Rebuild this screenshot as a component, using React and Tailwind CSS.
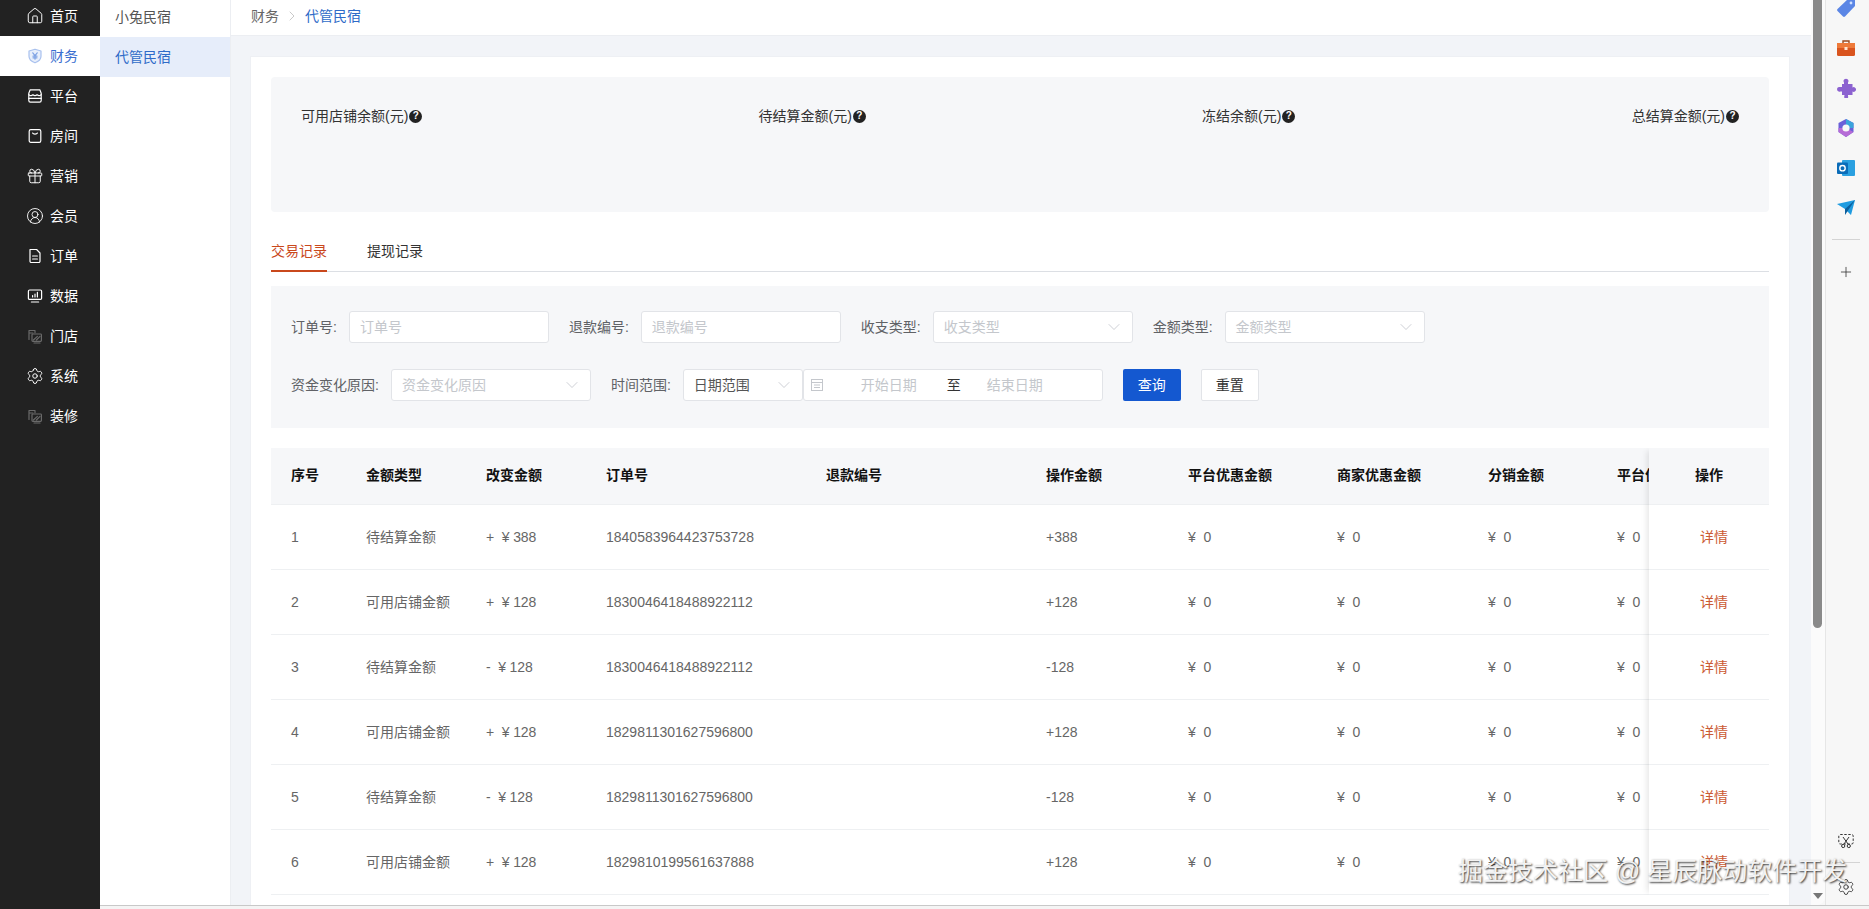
import { ChevronDown, ChevronRight, House, Gift, CircleUserRound, Plus, Settings } from 'lucide-react';

const sans = "font-['Liberation_Sans','Noto_Sans_CJK_SC',sans-serif]";

const rowGrid = 'grid grid-cols-[75px_120px_120px_220px_220px_142px_149px_151px_129px_200px]';

const records = [
  { no: 1, type: '待结算金额', change: '+  ¥ 388', order: '1840583964423753728', amount: '+388' },
  { no: 2, type: '可用店铺金额', change: '+  ¥ 128', order: '1830046418488922112', amount: '+128' },
  { no: 3, type: '待结算金额', change: '-  ¥ 128', order: '1830046418488922112', amount: '-128' },
  { no: 4, type: '可用店铺金额', change: '+  ¥ 128', order: '1829811301627596800', amount: '+128' },
  { no: 5, type: '待结算金额', change: '-  ¥ 128', order: '1829811301627596800', amount: '-128' },
  { no: 6, type: '可用店铺金额', change: '+  ¥ 128', order: '1829810199561637888', amount: '+128' },
];

const Svg = ({ children, className = 'w-4 h-4' }) => (
  <svg viewBox="0 0 16 16" fill="none" stroke="currentColor" strokeWidth="1.2" strokeLinecap="round" strokeLinejoin="round" className={className}>
    {children}
  </svg>
);

const ShieldIcon = () => (
  <Svg>
    <path d="M8 1.2 14 3v5.2c0 3.2-2.8 5.4-6 6.6-3.2-1.2-6-3.4-6-6.6V3z" stroke="#a9c1ee" fill="#e8effb" />
    <path d="M5.8 4.8 8 7.6l2.2-2.8M8 7.6v3.6M6 8.2h4M6 9.8h4" stroke="#7fa3e4" />
  </Svg>
);
const StoreIcon = () => (
  <Svg>
    <path d="M3.2 1.8h9.6l1.4 3.4v7.4a1.6 1.6 0 0 1-1.6 1.6H3.4a1.6 1.6 0 0 1-1.6-1.6V5.2z" />
    <path d="M1.8 6.6c1.4 1.4 2.8 1.4 4.1.2 1.4 1.2 2.8 1.2 4.2 0 1.3 1.2 2.7 1.2 4.1-.2" />
    <path d="M1.8 10.4h12.4" />
  </Svg>
);
const BagIcon = () => (
  <Svg>
    <rect x="2.2" y="1.6" width="11.6" height="12.8" rx="1.6" />
    <path d="M5.6 5c.6 1.4 4.2 1.4 4.8 0" />
  </Svg>
);
const FileIcon = () => (
  <Svg>
    <path d="M3 1.5h6.6L13 5v8.2a1.3 1.3 0 0 1-1.3 1.3H4.3A1.3 1.3 0 0 1 3 13.2z" />
    <path d="M5.6 8h4.8M5.6 11h4.8" />
  </Svg>
);
const MonitorIcon = () => (
  <Svg>
    <rect x="1.4" y="2" width="13.2" height="9.4" rx="1.2" />
    <path d="M4.4 14h7.2M5.6 9V7.6M8 9V6M10.4 9V4.4" />
  </Svg>
);
const BrokenImageIcon = () => (
  <Svg>
    <g stroke="#6a6a6a">
      <path d="M2 11.5V2.5h6v2.2M2 5h4" />
      <rect x="5" y="6" width="9.4" height="7.4" rx="0.8" />
      <path d="m6.4 12 4-3.6M9.4 12l3.6-3.6M7 15h6" />
    </g>
  </Svg>
);

const lucideClass = 'w-[18px] h-[18px] -mx-px';

const menu = [
  { label: '首页', icon: <House className={lucideClass} strokeWidth={1.3} /> },
  { label: '财务', icon: <ShieldIcon />, active: true },
  { label: '平台', icon: <StoreIcon /> },
  { label: '房间', icon: <BagIcon /> },
  { label: '营销', icon: <Gift className={lucideClass} strokeWidth={1.3} /> },
  { label: '会员', icon: <CircleUserRound className={lucideClass} strokeWidth={1.2} /> },
  { label: '订单', icon: <FileIcon /> },
  { label: '数据', icon: <MonitorIcon /> },
  { label: '门店', icon: <BrokenImageIcon /> },
  { label: '系统', icon: <Settings className={lucideClass} strokeWidth={1.3} /> },
  { label: '装修', icon: <BrokenImageIcon /> },
];

const HelpDot = () => (
  <span className="flex items-center justify-center w-[13px] h-[13px] rounded-full bg-[#222] text-white text-[10px] font-bold leading-none">?</span>
);

const SelectArrow = () => <ChevronDown className="w-5 h-5 -mr-[2px] text-[#c4c7cc]" strokeWidth={1} />;

const Field = ({ label, placeholder, select }) => (
  <div className="flex items-center gap-3">
    <span className="text-[#606266]">{label}:</span>
    <div className="w-[200px] h-8 flex items-center justify-between px-[10px] bg-white border border-[#e2e4e8] rounded-[3px] text-[#c4c7cc]">
      <span>{placeholder}</span>
      {select && <SelectArrow />}
    </div>
  </div>
);

function RecordTable() {
  return (
    <div className="mt-5 flex overflow-hidden text-[#666]">
      <div className="w-[1378px] overflow-hidden">
        <div className={`${rowGrid} w-[1526px] h-[57px] items-center pb-[2px] bg-[#f6f7f9] border-b border-[#eef0f2] font-bold text-[#111]`}>
          <div className="pl-5">序号</div>
          <div className="pl-5">金额类型</div>
          <div className="pl-5">改变金额</div>
          <div className="pl-5">订单号</div>
          <div className="pl-5">退款编号</div>
          <div className="pl-5">操作金额</div>
          <div className="pl-5">平台优惠金额</div>
          <div className="pl-5">商家优惠金额</div>
          <div className="pl-5">分销金额</div>
          <div className="pl-5 whitespace-nowrap">平台优惠分摊</div>
        </div>
        {records.map((r) => (
          <div key={r.no} className={`${rowGrid} w-[1526px] h-[65px] items-center border-b border-[#eef0f2]`}>
            <div className="pl-5">{r.no}</div>
            <div className="pl-5">{r.type}</div>
            <div className="pl-5 whitespace-pre tracking-[-0.1px]">{r.change}</div>
            <div className="pl-5">{r.order}</div>
            <div className="pl-5" />
            <div className="pl-5">{r.amount}</div>
            <div className="pl-5 whitespace-pre">¥  0</div>
            <div className="pl-5 whitespace-pre">¥  0</div>
            <div className="pl-5 whitespace-pre">¥  0</div>
            <div className="pl-5 whitespace-pre">¥  0</div>
          </div>
        ))}
      </div>
      <div className="w-[120px] shrink-0 relative shadow-[-5px_0_6px_-3px_rgba(0,0,0,0.1)]">
        <div className="h-[57px] flex items-center pb-[2px] pl-[46px] bg-[#f6f7f9] border-b border-[#eef0f2] font-bold text-[#111]">操作</div>
        {records.map((r) => (
          <div key={r.no} className="h-[65px] flex items-center pl-[51px] border-b border-[#eef0f2] text-[#cb5a33]">详情</div>
        ))}
      </div>
    </div>
  );
}

function SidePanel() {
  return (
    <div className="w-[44px] h-full flex flex-col items-center pr-[3px] bg-[#f7f7f7] border-l border-[#e6e6e6] relative">
      <div className="flex flex-col items-center gap-[20px] -mt-[2px]">
        {/* tag */}
        <svg viewBox="0 0 20 20" className="w-5 h-5">
          <path d="M12 1h6a1 1 0 0 1 1 1v6L9 18.5a1.5 1.5 0 0 1-2 0L1.5 13a1.5 1.5 0 0 1 0-2z" fill="#5b86e5" />
          <circle cx="15" cy="5" r="1.4" fill="#cfe0ff" />
        </svg>
        {/* briefcase */}
        <svg viewBox="0 0 20 20" className="w-5 h-5">
          <path d="M7 5V3h6v2" stroke="#9a4a20" strokeWidth="1.4" fill="none" />
          <rect x="1" y="5" width="18" height="13" rx="1.5" fill="#d9541e" />
          <rect x="1" y="5" width="18" height="5" fill="#ee7a3a" />
          <rect x="8.5" y="9" width="3" height="3" fill="#ffe3cf" />
        </svg>
        {/* puzzle */}
        <svg viewBox="0 0 20 20" className="w-5 h-5">
          <path d="M8 4.5a2.4 2.4 0 1 1 4 0V6h4.5v3.4a2.4 2.4 0 1 1 0 4.2V17H12v1a2 2 0 1 1-3.6 0v-1H6v-3.5H4.4a2.4 2.4 0 1 1 0-4.4H6V6h2z" fill="#8c62d0" />
        </svg>
        {/* ring logo */}
        <svg viewBox="0 0 20 20" className="w-5 h-5">
          <path d="M10 1 17.5 5 17.5 14 10 19 2.5 14 2.5 5z" fill="#6a5fd8" />
          <path d="M10 1 17.5 5 17.5 10 10 10z" fill="#3ba4dc" />
          <path d="M2.5 10 10 10 17.5 14 10 19 2.5 14z" fill="#b66bd6" />
          <circle cx="10" cy="10" r="3.6" fill="#f7f7f7" />
        </svg>
        {/* mail */}
        <svg viewBox="0 0 20 20" className="w-5 h-5">
          <rect x="6" y="2" width="13" height="16" rx="1" fill="#2aa0e0" />
          <rect x="1" y="4.5" width="11" height="11.5" rx="1" fill="#0a6cb8" />
          <circle cx="6.5" cy="10.2" r="2.7" fill="none" stroke="#fff" strokeWidth="1.4" />
        </svg>
        {/* plane */}
        <svg viewBox="0 0 20 20" className="w-5 h-5">
          <path d="M1 6 19 2 15 17 9 11z" fill="#1e9be0" />
          <path d="M9 11 19 2 11 14 9 17z" fill="#0b5f9e" />
        </svg>
      </div>
      <div className="w-7 h-px bg-[#d4d4d4] mt-[21px]" />
      <Plus className="w-4 h-4 mt-[24px] text-[#333]" strokeWidth={1.2} />
      <div className="mt-auto flex flex-col items-center pb-[9px]">
        <svg viewBox="0 0 16 16" fill="none" stroke="#333" strokeWidth="1" className="w-4 h-4">
          <rect x="0.8" y="1.5" width="14.4" height="9.5" rx="1.5" strokeDasharray="2.4 1.6" />
          <path d="m5 4 5 7M11 4l-5 7" />
          <circle cx="5.2" cy="13" r="1.6" />
          <circle cx="10.8" cy="13" r="1.6" />
        </svg>
        <div className="w-7 h-px bg-[#d4d4d4] mt-[13px]" />
        <Settings className="w-[18px] h-[18px] mt-[15px] text-[#333]" strokeWidth={1.2} />
      </div>
    </div>
  );
}

export default function App() {
  return (
    <div className={`${sans} relative w-full h-[909px] overflow-hidden flex bg-[#f7f7f7] text-sm`}>
      {/* main menu */}
      <aside className="w-[100px] shrink-0 bg-[#222] text-white overflow-hidden">
        <div className="-mt-1">
          {menu.map((m) => (
            <div key={m.label} className={`h-10 flex items-center pl-[27px] gap-[7px] ${m.active ? 'bg-white text-[#3a6fd0]' : ''}`}>
              {m.icon}
              <span>{m.label}</span>
            </div>
          ))}
        </div>
      </aside>

      <div className="flex-1 min-w-0 flex flex-col">
        <div className="flex-1 min-h-0 flex">
          <div className="flex-1 min-w-0 flex overflow-hidden rounded-br-lg">
            {/* sub menu */}
            <aside className="w-[131px] shrink-0 bg-white border-r border-[#eceef2]">
              <div className="-mt-[3px] h-10 flex items-center pl-[15px] text-[#555]">小兔民宿</div>
              <div className="h-10 flex items-center pl-[15px] bg-[#e6edfa] text-[#2f6bc8]">代管民宿</div>
            </aside>

            {/* page */}
            <main className="flex-1 min-w-0 flex flex-col bg-[#f2f4f8]">
              <div className="h-[36px] shrink-0 flex items-center pl-5 pb-[3px] gap-[6px] bg-white border-b border-[#eceef2]">
                <span className="text-[#666]">财务</span>
                <ChevronRight className="w-4 h-4 -mx-px text-[#bbb]" strokeWidth={1.2} />
                <span className="text-[#2f6bc8]">代管民宿</span>
              </div>
              <div className="mt-[20px] ml-[19px] mr-[21px] p-5 bg-white border border-[#eef0f4]">
                <div className="h-[135px] px-[30px] pt-[29px] flex justify-between bg-[#f6f7f9] rounded-sm text-[#333]">
                  {['可用店铺余额(元)', '待结算金额(元)', '冻结余额(元)', '总结算金额(元)'].map((t) => (
                    <div key={t} className="flex items-center gap-[1px] h-5">
                      <span>{t}</span>
                      <HelpDot />
                    </div>
                  ))}
                </div>

                <div className="mt-[26px] flex gap-10 border-b border-[#dcdfe4] h-[34px]">
                  <div className="h-[34px] pt-[3px] border-b-2 border-[#c9481c] text-[#c9481c]">交易记录</div>
                  <div className="pt-[3px] text-[#333]">提现记录</div>
                </div>

                <div className="mt-[14px] h-[142px] px-5 pt-[25px] flex flex-col gap-[26px] bg-[#f6f7f9]">
                  <div className="flex gap-5">
                    <Field label="订单号" placeholder="订单号" />
                    <Field label="退款编号" placeholder="退款编号" />
                    <Field label="收支类型" placeholder="收支类型" select />
                    <Field label="金额类型" placeholder="金额类型" select />
                  </div>
                  <div className="flex gap-5">
                    <Field label="资金变化原因" placeholder="资金变化原因" select />
                    <div className="flex items-center">
                      <span className="text-[#606266] mr-3">时间范围:</span>
                      <div className="w-[120px] h-8 flex items-center justify-between px-[10px] bg-white border border-[#e2e4e8] rounded-[3px] text-[#555]">
                        <span>日期范围</span>
                        <SelectArrow />
                      </div>
                      <div className="w-[300px] h-8 flex items-center pl-[6px] bg-white border border-[#e2e4e8] rounded-[3px] text-[#c4c7cc]">
                        <svg viewBox="0 0 14 14" fill="none" stroke="currentColor" className="w-[14px] h-[14px]">
                          <rect x="1.5" y="1.5" width="11" height="11" />
                          <path d="M1.5 4.5h11M4 7h6M4 9.5h6" />
                        </svg>
                        <span className="ml-[37px]">开始日期</span>
                        <span className="ml-[30px] text-[#333]">至</span>
                        <span className="ml-[26px]">结束日期</span>
                      </div>
                      <button className="ml-5 w-[58px] h-8 bg-[#1458d0] text-white rounded-[2px]">查询</button>
                      <button className="ml-5 w-[58px] h-8 bg-white border border-[#e2e4e8] rounded-[2px] text-[#333]">重置</button>
                    </div>
                  </div>
                </div>

                <RecordTable />
              </div>
            </main>

            {/* page scrollbar */}
            <div className="w-[14px] shrink-0 flex flex-col bg-[#fbfbfb] pl-[2px]">
              <div className="w-[9px] h-[628px] rounded-b-full bg-[#8a8a8a]" />
              <div className="mt-auto mb-[6px] w-0 h-0 border-x-[5px] border-x-transparent border-t-[6px] border-t-[#777]" />
            </div>
          </div>
          <SidePanel />
        </div>
        <div className="h-1 shrink-0 border-t border-[#c8c8c8] bg-[#f4f4f4]" />
      </div>

      <div className="absolute left-[1458px] top-[854px] text-[25px] leading-[34px] whitespace-nowrap text-[#f2f2f2] [text-shadow:1px_1px_2px_rgba(0,0,0,0.8)]">
        掘金技术社区 @ 星辰脉动软件开发
      </div>
    </div>
  );
}
